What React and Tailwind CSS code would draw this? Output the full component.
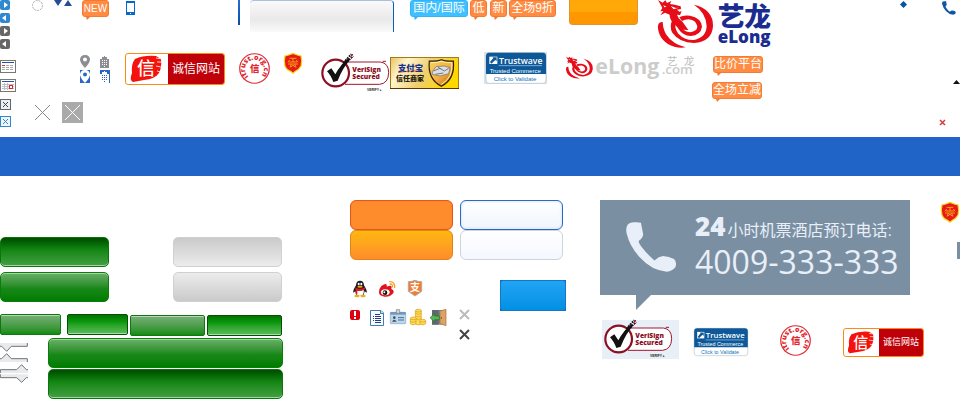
import React from "react";

const cjk = "font-['Liberation_Sans','Noto_Sans_CJK_SC',sans-serif]";

function Tag({ children, color = "orange", size = "text-[12px]", className = "" }) {
  const blue = color === "blue";
  return (
    <span className={`flex shrink-0 flex-col ${className}`}>
      <span
        className={`${cjk} ${size} flex h-[17px] items-center justify-center rounded-[3px] border leading-[15px] whitespace-nowrap text-white ${
          blue ? "border-[#35b4f5] bg-[#40c0ff]" : "border-[#f27b35] bg-[#ff8c42]"
        }`}
      >
        {children}
      </span>
      <svg className={`ml-[4px] ${blue ? "text-[#35b4f5]" : "text-[#f27b35]"}`} width="4" height="3" aria-hidden="true">
        <path d="M0 0H4L1 3Z" fill="currentColor" />
      </svg>
    </span>
  );
}

function ArrowButton({ left, dark }) {
  return (
    <button
      type="button"
      aria-label={left ? "Previous" : "Next"}
      className={`h-[10px] w-[10px] rounded-[2px] ${dark ? "bg-[#666]" : "bg-[#2f88d0]"}`}
    >
      <svg width="10" height="10" viewBox="0 0 10 10" aria-hidden="true">
        <path d={left ? "M6 2V8L2 5Z" : "M4 2V8L8 5Z"} fill="#fff" />
      </svg>
    </button>
  );
}

function Cross({ size, className = "", width = 1 }) {
  return (
    <svg width={size} height={size} viewBox={`0 0 ${size} ${size}`} className={className} aria-hidden="true">
      <path d={`M0 0L${size} ${size}M${size} 0L0 ${size}`} stroke="currentColor" strokeWidth={width} />
    </svg>
  );
}

function Calendar({ marked }) {
  return (
    <svg width="16" height="13" viewBox="0 0 16 13" shapeRendering="crispEdges" aria-hidden="true">
      <rect width="16" height="13" fill="#78786e" />
      <rect x="1" y="1" width="14" height="11" fill="#fff" />
      <path d="M2 2H14V3H2Z" fill="#2850a8" />
      {marked ? (
        <>
          <path d="M2 5.5H14M2 7.5H14M2 9.5H14M4.5 4V11M7.5 4V11" stroke="#b9c0cc" />
          <rect x="9.5" y="6.5" width="3" height="3" fill="#fff" stroke="#f02020" />
        </>
      ) : (
        <>
          <path d="M2 5.5H5" stroke="#e03030" />
          <path d="M6 5.5H9M10 5.5H13M2 7.5H5M6 7.5H9M10 7.5H13M2 9.5H5M6 9.5H9M10 9.5H13" stroke="#aaa" />
        </>
      )}
    </svg>
  );
}

function Pin({ active }) {
  return (
    <svg width="10" height="13" viewBox="0 0 10 13" aria-hidden="true">
      {active && <rect width="10" height="13" fill="#2a66cc" />}
      <path
        fillRule="evenodd"
        d="M5 0C2 0 0 2 0 4.6C0 8 5 13 5 13C5 13 10 8 10 4.6C10 2 8 0 5 0ZM5 2.6A2 2 0 1 1 5 6.6A2 2 0 0 1 5 2.6Z"
        fill={active ? "#fff" : "#8c8e94"}
      />
    </svg>
  );
}

function Building({ active }) {
  return (
    <svg width="10" height="13" viewBox="0 0 10 13" shapeRendering="crispEdges" aria-hidden="true">
      {active && <rect width="10" height="13" fill="#2a66cc" />}
      <path d="M4 1H5V2H7V4H9V13H0V4H2V2H4Z" fill={active ? "#fff" : "#8c8e94"} />
      <path
        d="M2 5.5H3M4 5.5H5M6 5.5H7M2 7.5H3M4 7.5H5M6 7.5H7M2 9.5H3M4 9.5H5M6 9.5H7M4 11.5H5"
        stroke={active ? "#2a66cc" : "#fff"}
      />
    </svg>
  );
}

function TrustSite({ small }) {
  return (
    <a
      href="#site"
      className={`${cjk} flex shrink-0 overflow-hidden rounded-[3px] border border-[#ff8a10] bg-white text-white ${
        small ? "h-[29px] w-[81px] text-[9px]" : "h-[32px] w-[100px] text-[12px]"
      }`}
    >
      <svg className={small ? "w-[35px]" : "w-[42px]"} height="100%" viewBox="0 0 42 30" aria-hidden="true">
        <path d="M9 5Q18 1 30 2L35 5Q36 13 33 19Q29 25 18 26L7 28Q3 26 6 19Q5 10 9 5Z" fill="#f5120c" />
        <path d="M30 4L36 5M31 8H36M30 12L35 13M31 17L35 18" stroke="#fff" strokeWidth="0.8" />
        <text x="11" y="21" fontSize="18" fontWeight="500" fill="#fff" fontFamily="Noto Sans CJK SC, sans-serif">
          信
        </text>
      </svg>
      <span className="flex flex-1 items-center justify-center bg-[#c00008] whitespace-nowrap">诚信网站</span>
    </a>
  );
}

function Seal({ id }) {
  return (
    <svg className="shrink-0" width="31" height="31" viewBox="0 0 62 62" aria-hidden="true">
      <defs>
        <path id={id} d="M19 47A19 19 0 1 1 44 46" />
      </defs>
      <circle cx="31" cy="31" r="29.5" fill="#fff" stroke="#e02830" strokeWidth="2.4" />
      <text fontSize="14" fontWeight="800" fill="#e02830" fontFamily="Open Sans, sans-serif">
        <textPath href={`#${id}`}>itrust.org.cn</textPath>
      </text>
      <text x="22" y="38" fontSize="19" fontWeight="900" fill="#e02830" fontFamily="Noto Sans CJK SC, sans-serif">
        信
      </text>
    </svg>
  );
}

function Shield() {
  return (
    <svg className="shrink-0" width="18" height="21" viewBox="0 0 54 63" aria-hidden="true">
      <path d="M27 1L40 6L51 9Q55 22 51 39Q45 50 34 55L27 61L20 55Q7 50 3 39Q-1 22 3 9L14 6Z" fill="#e8191c" stroke="#f5d90a" strokeWidth="3.5" />
      <path d="M17 16H37M27 16V27M15 27H39M12 33H42M17 21L12 28M37 21L42 28M22 34L18 43M32 34L36 43M20 42L27 37L34 42" fill="none" stroke="#f5d90a" strokeWidth="2.2" />
    </svg>
  );
}

function VeriSign() {
  return (
    <svg className="shrink-0" width="69" height="38" viewBox="0 0 207 114" aria-hidden="true">
      <path d="M72 24H178Q203 27 203 56Q202 88 176 91H72" fill="#fff" stroke="#a01830" strokeWidth="3" />
      <circle cx="44" cy="57" r="40" fill="#fff" stroke="#8c1024" strokeWidth="6.5" />
      <path d="M18 52L31 43L43 61Q58 32 83 12L88 16Q65 42 50 80L37 84Q29 63 18 52Z" fill="#111" />
      <path d="M68 26L91 0M74 30L96 5M64 35L77 14" stroke="#111" strokeWidth="5" strokeDasharray="5 3" />
      <path d="M88 8L96 0M90 14L97 8" stroke="#a01830" strokeWidth="3" />
      <text x="94" y="54" fontSize="20" fontWeight="800" fill="#8c1024" fontFamily="Open Sans, sans-serif">VeriSign</text>
      <text x="94" y="75" fontSize="20" fontWeight="800" fill="#8c1024" fontFamily="Open Sans, sans-serif">Secured</text>
      <text x="138" y="110" fontSize="10" fontWeight="700" fill="#222" fontFamily="Liberation Sans, sans-serif">VERIFY ▸</text>
      <path d="M185 22H195" stroke="#a01830" strokeWidth="3" />
    </svg>
  );
}

function Alipay() {
  return (
    <svg className="shrink-0" width="69" height="32" viewBox="0 0 207 96" aria-hidden="true">
      <defs>
        <linearGradient id="gold" x1="0" y1="0" x2="1" y2="0.3">
          <stop offset="0" stopColor="#e8c060" />
          <stop offset="0.25" stopColor="#fff6cc" />
          <stop offset="0.6" stopColor="#efce70" />
          <stop offset="1" stopColor="#ffd800" />
        </linearGradient>
        <linearGradient id="crest" x1="0" y1="0" x2="1" y2="1">
          <stop offset="0" stopColor="#f8d460" />
          <stop offset="0.5" stopColor="#f8b040" />
          <stop offset="1" stopColor="#b8680c" />
        </linearGradient>
      </defs>
      <rect x="1.5" y="1.5" width="204" height="93" fill="url(#gold)" stroke="#a87818" strokeWidth="3" />
      <path d="M0 94.5H207" stroke="#5c3208" strokeWidth="3" />
      <path d="M118 12Q140 14 154 8Q168 14 190 12Q196 66 154 88Q112 66 118 12Z" fill="url(#crest)" stroke="#2c2008" strokeWidth="3.5" />
      <path d="M123 17Q142 18 154 13Q168 18 185 17Q190 62 154 82" fill="none" stroke="#fff0b0" strokeWidth="3" />
      <path d="M127 44L138 29L162 27L180 32L176 50L150 57L127 52Z" fill="#dcdfe2" stroke="#6c6c6c" strokeWidth="2" />
      <path d="M130 42L150 34L163 42L176 34M136 52L160 48M144 30L154 37" fill="none" stroke="#777" strokeWidth="3" />
      <path d="M24 46Q62 40 98 42" stroke="#e85010" strokeWidth="3" fill="none" />
      <text x="24" y="43" fontSize="25" fontWeight="900" fill="#16308c" fontFamily="Noto Sans CJK SC, sans-serif">支付宝</text>
      <text x="18" y="71" fontSize="21" fontWeight="900" fill="#1c1a10" fontFamily="Noto Sans CJK SC, sans-serif">信任商家</text>
    </svg>
  );
}

function Trustwave({ small }) {
  return (
    <svg
      className="shrink-0"
      width={small ? 58 : 63}
      height={small ? 28 : 32}
      viewBox={small ? "5 1 182 94" : "0 0 189 96"}
      aria-hidden="true"
    >
      {!small && <rect width="189" height="96" fill="#d4e4f0" />}
      <rect x="6" y="2" width="180" height="92" rx="9" fill="#fff" stroke="#b4bcc4" strokeWidth="2" />
      <path d="M6 66V12Q6 2 16 2H176Q186 2 186 12V66Z" fill="#0c5898" />
      <path d="M16 14H40V36H16Z" fill="#fff" />
      <path d="M18 30L28 18L25 16H38V28L34 24L22 35Z" fill="#0c5898" />
      <path d="M44 41H174" stroke="#b8d4ec" strokeWidth="2" />
      <text x="45" y="35" fontSize="26" fontWeight="600" fill="#fff" fontFamily="Open Sans, sans-serif">Trustwave</text>
      <text x="17" y="62" fontSize="18" fill="#fff" fontFamily="Liberation Sans, sans-serif">Trusted Commerce</text>
      <text x="29" y="87" fontSize="18" fill="#1874bc" fontFamily="Liberation Sans, sans-serif">Click to Validate</text>
    </svg>
  );
}

function Dragon() {
  return (
    <g fill="#e60c18">
      <path d="M98 66Q82 64 84 86Q90 126 133 140Q150 145 167 142Q128 132 109 104Q99 88 98 66Z" />
      <path d="M192 14Q250 28 249 78Q246 125 192 129Q148 128 127 98Q117 80 127 60L136 67Q133 86 145 101Q165 122 192 120Q229 112 230 78Q228 38 192 14Z" />
      <path d="M148 52Q160 44 180 47Q214 54 216 80Q212 106 182 108Q158 107 146 88L138 74L150 68Q156 95 180 97Q202 94 202 79Q198 60 176 58Q164 58 156 63Z" />
      <path d="M84 0L98 8L106 1L111 9L124 3L120 12L134 14L152 19L153 27L141 29L148 35L155 34L150 45L141 44L146 55L158 66L175 90Q150 91 134 74Q118 58 119 44L105 38L91 46L100 33L91 34L97 24L92 14Z" />
      <path d="M100 16L110 20L103 22ZM122 18L138 24L146 23L131 28Z" fill="#fff" />
    </g>
  );
}

function ELongLogo() {
  return (
    <svg className="shrink-0" width="114" height="49" viewBox="84 0 342 147" role="img" aria-label="eLong">
      <Dragon />
      <text x="263" y="78" fontSize="80" fontWeight="900" fill="#1a2c90" fontFamily="Noto Sans CJK SC, sans-serif">艺龙</text>
      <text x="263" y="128" fontSize="51" fontWeight="800" fill="#1a2c90" fontFamily="Open Sans, sans-serif">eLong</text>
    </svg>
  );
}

function ELongGray() {
  return (
    <svg className="shrink-0" width="131" height="25" viewBox="0 0 393 75" role="img" aria-label="eLong.com">
      <svg x="0" y="2" width="82" height="66" viewBox="84 0 168 144" preserveAspectRatio="none">
        <Dragon />
      </svg>
      <text x="88" y="53" fontSize="64" fontWeight="700" fill="#ccc" fontFamily="Open Sans, sans-serif">eLong</text>
      <text x="287" y="53" fontSize="40" fontWeight="600" fill="#ccc" fontFamily="Open Sans, sans-serif">.com</text>
      <text x="303" y="27" fontSize="32" fill="#bbb" fontFamily="Noto Sans CJK SC, sans-serif">艺</text>
      <text x="353" y="27" fontSize="32" fill="#bbb" fontFamily="Noto Sans CJK SC, sans-serif">龙</text>
    </svg>
  );
}

const handset =
  "M3 12Q8 -1 31 1L45 2Q48 16 52 38Q50 50 39 57Q36 62 51 80Q65 98 86 116Q99 104 112 103Q130 105 145 112Q155 122 149 137Q140 149 123 150Q77 146 43 108Q12 76 2 35Q-1 22 3 12Z";

function TopSprites() {
  return (
    <section className="flex">
      <div className="flex w-4 shrink-0 flex-col items-start">
        <div className="flex flex-col gap-[3px]">
          <ArrowButton />
          <ArrowButton left />
          <ArrowButton dark />
          <ArrowButton left dark />
        </div>
        <div className="mt-[11px] flex flex-col gap-[6px]">
          <Calendar />
          <Calendar marked />
        </div>
        <div className="mt-[7px] flex flex-col gap-[6px]">
          <button type="button" aria-label="Close" className="flex h-[11px] w-[11px] items-center justify-center border border-[#666] bg-[#e8f0f6] text-[#444]">
            <Cross size={5} />
          </button>
          <button type="button" aria-label="Close" className="flex h-[11px] w-[11px] items-center justify-center border border-[#2f88d0] bg-[#eef6fc] text-[#2f88d0]">
            <Cross size={5} />
          </button>
        </div>
      </div>

      <div className="min-w-0 flex-1">
        <div className="flex h-[52px] items-start">
          <svg className="ml-4 shrink-0" width="11" height="11" aria-hidden="true">
            <circle cx="5.5" cy="5.5" r="5" fill="none" stroke="#aaa" strokeDasharray="2 1" />
          </svg>
          <svg className="ml-[11px] shrink-0" width="18" height="6" aria-hidden="true">
            <path d="M0 0H8L4 6ZM10 6H18L14 0Z" fill="#284c94" />
          </svg>
          <Tag size="text-[10px]" className="ml-[10px] w-[27px]">
            NEW
          </Tag>
          <svg className="mt-px ml-[17px] shrink-0" width="9" height="14" shapeRendering="crispEdges" aria-hidden="true">
            <rect width="9" height="14" fill="#0468cc" />
            <rect x="1" y="2" width="7" height="9" fill="#fff" />
            <rect x="4" y="12" width="1" height="1" fill="#fff" />
          </svg>
          <div className="ml-[103px] h-[25px] w-[2px] shrink-0 bg-linear-to-b from-[#2070d0] to-[#0c4ca4]" />
          <div className="ml-[10px] h-8 w-[144px] shrink-0 rounded-t-[4px] border-t border-r border-t-[#a8c0dc] border-r-[#0c60bc] bg-linear-to-b from-[#fafafa] via-[#e9e9e9] via-60% to-[#fafafa]" />
          <Tag color="blue" className="ml-4 w-[58px]">
            国内/国际
          </Tag>
          <Tag className="ml-[2px] w-[17px]">低</Tag>
          <Tag className="ml-[3px] w-[17px]">新</Tag>
          <Tag className="ml-[2px] w-[47px]">全场9折</Tag>
          <button
            type="button"
            aria-label="Search"
            className="ml-[13px] h-[25px] w-[69px] shrink-0 rounded-b-[4px] border border-t-0 border-[#e09430] bg-linear-to-b from-[#ffa808] from-50% to-[#ff9800] to-50%"
          />
          <div className="ml-5">
            <ELongLogo />
          </div>
          <svg className="mt-px mr-[34px] ml-auto shrink-0" width="8" height="7" aria-hidden="true">
            <path d="M3.5 0L7 3.5L3.5 7L0 3.5Z" fill="#0854a0" />
          </svg>
          <svg className="mt-px mr-[4px] shrink-0" width="14" height="14" viewBox="0 0 154 151" aria-hidden="true">
            <path d={handset} fill="#0c58a4" />
          </svg>
        </div>

        <div className="flex h-[50px] items-start">
          <div className="mt-[3px] ml-16 grid shrink-0 grid-cols-2 gap-x-[10px] gap-y-[2px]">
            <Pin />
            <Building />
            <Pin active />
            <Building active />
          </div>
          <div className="mt-px ml-[15px] flex shrink-0 items-start gap-[14px]">
            <TrustSite />
            <Seal id="seal-top" />
            <Shield />
          </div>
          <div className="mt-[2px] ml-[19px]">
            <VeriSign />
          </div>
          <div className="mt-[5px]">
            <Alipay />
          </div>
          <div className="ml-[25px]">
            <Trustwave />
          </div>
          <div className="mt-[4px] ml-[19px]">
            <ELongGray />
          </div>
          <div className="mt-1 ml-[15px] flex flex-col gap-[6px]">
            <Tag className="ml-px w-[50px]">比价平台</Tag>
            <Tag className="w-[50px]">全场立减</Tag>
          </div>
          <svg className="mt-7 ml-auto shrink-0" width="7" height="4" aria-hidden="true">
            <path d="M0 4L3.5 0L7 4Z" fill="#111" />
          </svg>
        </div>

        <div className="flex h-[35px] items-start">
          <button type="button" aria-label="Close" className="mt-[3px] ml-[19px] text-[#888]">
            <Cross size={15} />
          </button>
          <button type="button" aria-label="Close" className="ml-3 flex h-[21px] w-[21px] items-center justify-center bg-[#aaa] text-white">
            <Cross size={15} />
          </button>
          <button type="button" aria-label="Remove" className="mt-[18px] mr-[15px] ml-auto text-[#d43c3c]">
            <Cross size={5} width={1.5} />
          </button>
        </div>
      </div>
    </section>
  );
}

const greenUp = "border-[#088008] bg-linear-to-b from-[#68b068] via-[#188818] via-55% to-[#007c00] shadow-[inset_0_1px_0_#a8d4a8]";
const greenDown = "border-[#087808] bg-linear-to-b from-[#004c00] via-[#108410] via-40% to-[#40a040] shadow-[inset_0_-1px_0_#a8d4a8]";
const tabUp = "border-[#107810] bg-linear-to-b from-[#78b078] to-[#0c8c0c] shadow-[inset_0_1px_0_#b4d8b4]";
const tabDown = "border-[#045004] bg-linear-to-b from-[#007400] via-[#109c10] via-40% to-[#58bc58] shadow-[inset_0_-1px_0_#a8dca8]";

function Blank({ label, className }) {
  return <button type="button" aria-label={label} className={`block shrink-0 border ${className}`} />;
}

function PointerStrips() {
  return (
    <svg className="mt-[5px] shrink-0" width="28" height="40" viewBox="0 0 84 120" aria-hidden="true">
      <g fill="#e8eaec" stroke="#70747a" strokeWidth="3">
        <path d="M0 0H84V10H34L20 25L4 10H0Z" stroke="none" />
        <path d="M0 10H5L20 25L34 10H82V0" fill="none" />
        <path d="M0 57V47H5L20 32L34 47H84V57Z" stroke="none" />
        <path d="M0 47H5L20 32L34 47H82V57" fill="none" />
        <path d="M0 90V80H50L65 65L79 80H84V90Z" stroke="none" />
        <path d="M1 90V80H50L65 65L79 80H84" fill="none" />
        <path d="M0 94V104H50L65 119L79 104H84V94Z" stroke="none" />
        <path d="M1 94V104H50L65 118L79 104H84" fill="none" />
      </g>
    </svg>
  );
}

function GreenButtons() {
  return (
    <div className="w-[283px] shrink-0 pt-[61px]">
      <div className="grid grid-cols-[109px_109px] gap-x-16 gap-y-[5px]">
        <Blank label="Book pressed" className={`h-[30px] rounded-[5px] ${greenDown}`} />
        <Blank label="Disabled pressed" className="h-[30px] rounded-[5px] border-[#d0d0d0] bg-linear-to-b from-[#cacaca] to-[#ececec]" />
        <Blank label="Book" className={`h-[30px] rounded-[5px] ${greenUp}`} />
        <Blank label="Disabled" className="h-[30px] rounded-[5px] border-[#d0d0d0] bg-linear-to-b from-[#ececec] to-[#cacaca]" />
      </div>
      <div className="mt-3 flex items-start">
        <Blank label="Select" className={`h-[21px] w-[61px] rounded-[2px] ${tabUp}`} />
        <Blank label="Select pressed" className={`ml-[6px] h-[21px] w-[61px] rounded-[2px] ${tabDown}`} />
        <Blank label="Reserve" className={`mt-px ml-[2px] h-[21px] w-[75px] rounded-[2px] ${tabUp}`} />
        <Blank label="Reserve pressed" className={`mt-px ml-[2px] h-[21px] w-[75px] rounded-[2px] ${tabDown}`} />
      </div>
      <div className="mt-[2px] flex gap-5">
        <PointerStrips />
        <div className="flex flex-1 flex-col gap-px">
          <Blank label="Submit" className={`h-[30px] rounded-[5px] ${greenUp}`} />
          <Blank label="Submit pressed" className={`h-[30px] rounded-[5px] ${greenDown}`} />
        </div>
      </div>
    </div>
  );
}

function SocialIcons() {
  return (
    <div className="flex items-start">
      <svg className="ml-[2px]" width="16" height="18" viewBox="0 0 48 54" aria-hidden="true">
        <path d="M12 16Q12 2 24 2Q36 2 36 16Q46 32 44 38L38 34L34 48H14L10 34L4 38Q2 32 12 16Z" fill="#1c1c20" />
        <path d="M13 29Q24 35 35 29Q38 47 24 48Q10 47 13 29Z" fill="#fff" />
        <path d="M10 22Q24 31 38 22L39 28Q24 36 16 32V42H11V30Z" fill="#e01c20" />
        <ellipse cx="20" cy="12" rx="3" ry="4" fill="#fff" />
        <ellipse cx="28" cy="12" rx="3" ry="4" fill="#fff" />
        <ellipse cx="24" cy="20" rx="8" ry="3" fill="#f8a818" />
        <ellipse cx="15" cy="48" rx="8" ry="4" fill="#f8a818" />
        <ellipse cx="33" cy="48" rx="8" ry="4" fill="#f8a818" />
      </svg>
      <svg className="ml-[10px]" width="18" height="18" viewBox="0 0 54 54" aria-hidden="true">
        <path d="M10 18Q24 8 26 14Q27 18 26 20Q41 14 41 21L40 27Q50 31 46 39Q38 51 20 50Q3 48 3 37Q2 27 10 18Z" fill="#e0141c" />
        <ellipse cx="22" cy="37" rx="13" ry="9" fill="#fff" />
        <circle cx="21" cy="38" r="7" fill="#111" />
        <circle cx="19" cy="37" r="3" fill="#fff" />
        <path d="M34 5Q52 4 50 24M35 12Q45 11 43 22" fill="none" stroke="#f89c20" strokeWidth="4" />
      </svg>
      <svg className="ml-[12px]" width="14" height="17" viewBox="0 0 42 51" aria-hidden="true">
        <path d="M21 1Q32 6 41 5V34L21 48L1 34V5Q12 5 21 1Z" fill="#f47c30" stroke="#aaa" strokeWidth="3" />
        <text x="6" y="33" fontSize="30" fontWeight="700" fill="#fff" fontFamily="Noto Sans CJK SC, sans-serif">支</text>
      </svg>
    </div>
  );
}

function AccountIcons() {
  return (
    <div className="flex items-start">
      <svg className="mt-px" width="10" height="10" aria-hidden="true">
        <rect width="10" height="10" rx="2" fill="#dc0010" />
        <path d="M4 1H6V6H4ZM4 7H6V9H4Z" fill="#fff" />
      </svg>
      <svg className="ml-[10px]" width="14" height="17" viewBox="0 0 14 17" aria-hidden="true">
        <path d="M0.500 1.500H11L13.500 4V16.500H0.500Z" fill="#f8fcff" stroke="#407cac" />
        <path d="M10.500 1.500V4.500H13.500" fill="#c8e0f4" stroke="#407cac" />
        <path d="M5 5.500H10M5 7.500H11M5 9.500H11M5 11.500H11M5 13.500H11M3 7.500H4M3 9.500H4M3 11.500H4" stroke="#283c80" />
      </svg>
      <svg className="ml-[6px]" width="16" height="17" viewBox="0 0 48 51" aria-hidden="true">
        <rect x="1" y="10" width="46" height="34" rx="2" fill="#b8d8f0" stroke="#88a4bc" strokeWidth="2" />
        <path d="M1 9H47V17H1Z" fill="#7098c0" />
        <path d="M19 2H29V13H19Z" fill="#d8d8d8" stroke="#787878" strokeWidth="2" />
        <path d="M24 26H42M24 33H42" stroke="#506c88" strokeWidth="3" />
        <circle cx="13" cy="26" r="4" fill="#504c58" />
        <path d="M6 38Q13 26 20 38Z" fill="#504c58" />
      </svg>
      <svg className="ml-[4px]" width="16" height="17" viewBox="0 0 48 51" aria-hidden="true">
        <g fill="#fcdc58" stroke="#dc9c18" strokeWidth="2">
          <path d="M16 5V45Q25 51 34 45V5Z" />
          <ellipse cx="25" cy="5" rx="9" ry="4" />
          <path d="M17 13Q25 19 33 13M17 21Q25 27 33 21M17 29Q25 35 33 29" fill="none" />
          <path d="M1 29V44Q9 52 18 44V29Z" />
          <ellipse cx="10" cy="28" rx="9" ry="4" />
          <path d="M1 37Q9 43 18 37" fill="none" />
          <path d="M30 36V44Q39 52 47 44V36Z" />
          <ellipse cx="38" cy="35" rx="9" ry="4" />
        </g>
      </svg>
      <svg className="ml-[4px]" width="17" height="17" viewBox="0 0 51 51" aria-hidden="true">
        <path d="M6 3H46V47H6Z" fill="#78848c" />
        <path d="M6 3H26V47H6Z" fill="#606870" />
        <path d="M30 6L48 1V50L30 44Z" fill="#dca464" stroke="#a87038" strokeWidth="2" />
        <path d="M0 26L14 14V21H28V32H14V39Z" fill="#58b458" stroke="#207828" strokeWidth="2" />
        <circle cx="34" cy="27" r="2" fill="#6c4414" />
      </svg>
    </div>
  );
}

function MiddleSprites() {
  return (
    <div className="ml-[67px] w-[216px] shrink-0 pt-6">
      <div className="grid grid-cols-[103px_103px] gap-x-[7px]">
        <Blank label="Orange pressed" className="h-[30px] rounded-[6px] border-[#e4581c] bg-[#ff8c2c] shadow-[inset_0_0_1px_#d86818]" />
        <Blank label="White active" className="h-[30px] rounded-[6px] border-[#2c68c4] bg-linear-to-b from-white to-[#f0f6fc] shadow-[inset_0_0_3px_#c0d8f0]" />
        <Blank label="Orange" className="h-[30px] rounded-[6px] border-[#e08418] bg-linear-to-b from-[#ffb80c] to-[#ff8c28]" />
        <Blank label="White" className="h-[30px] rounded-[6px] border-[#d0d4d8] bg-linear-to-b from-white to-[#f4f8ff]" />
      </div>
      <div className="mt-5 flex items-start justify-between">
        <div>
          <SocialIcons />
          <div className="mt-[11px] flex items-start">
            <AccountIcons />
            <div className="mt-px ml-[13px] flex flex-col gap-[11px]">
              <button type="button" aria-label="Dismiss" className="block text-[#bbb]">
                <Cross size={9} width={2} />
              </button>
              <button type="button" aria-label="Dismiss" className="block text-[#444]">
                <Cross size={9} width={2} />
              </button>
            </div>
          </div>
        </div>
        <div className="bg-[#1c68c4]">
          <Blank label="Blue" className="h-[31px] w-[66px] rounded-[3px] border-[#1478c4] bg-linear-to-b from-[#20a4f4] to-[#0090e4]" />
        </div>
      </div>
    </div>
  );
}

function RightSprites() {
  return (
    <div className="ml-[34px] min-w-0 flex-1 pt-6">
      <div className="flex items-start">
        <div className="shrink-0">
          <div className="flex h-[95px] w-[310px] items-start bg-[#7b8fa3] text-[#e8eff9]">
            <svg className="mt-[22px] ml-[26px] shrink-0" width="51" height="50" viewBox="0 0 154 151" aria-hidden="true">
              <path d={handset} fill="currentColor" />
            </svg>
            <div className="mt-[10px] ml-[18px] whitespace-nowrap">
              <p className="flex h-9 items-baseline gap-[2px]">
                <span className="font-['Open_Sans',sans-serif] text-[26px] leading-8 font-extrabold">24</span>
                <span className={`${cjk} text-[16px] leading-8`}>小时机票酒店预订电话:</span>
              </p>
              <p className="font-['Open_Sans',sans-serif] text-[32px] leading-8">4009-333-333</p>
            </div>
          </div>
          <svg className="ml-9 block" width="15" height="15" aria-hidden="true">
            <path d="M0 0H15L0 15Z" fill="#7b8fa3" />
          </svg>
        </div>
        <div className="mt-[2px] ml-auto flex flex-col items-end">
          <div className="mr-px">
            <Shield />
          </div>
          <div className="mt-[19px] h-[17px] w-[3px] bg-[#7b8fa3]" />
        </div>
      </div>
      <div className="mt-[10px] ml-[2px] flex items-start">
        <div className="flex h-[39px] w-[77px] shrink-0 items-start bg-[#e8eff7] pl-[2px]">
          <VeriSign />
        </div>
        <div className="mt-2 ml-[13px]">
          <Trustwave small />
        </div>
        <div className="mt-[5px] ml-[30px]">
          <Seal id="seal-bottom" />
        </div>
        <div className="mt-2 ml-8">
          <TrustSite small />
        </div>
      </div>
    </div>
  );
}

export default function App() {
  return (
    <main className="overflow-x-hidden bg-white [&_svg]:block [&_svg]:overflow-visible">
      <TopSprites />
      <div className="h-[39px] bg-[#2064c8]" />
      <section className="flex items-start">
        <GreenButtons />
        <MiddleSprites />
        <RightSprites />
      </section>
    </main>
  );
}
